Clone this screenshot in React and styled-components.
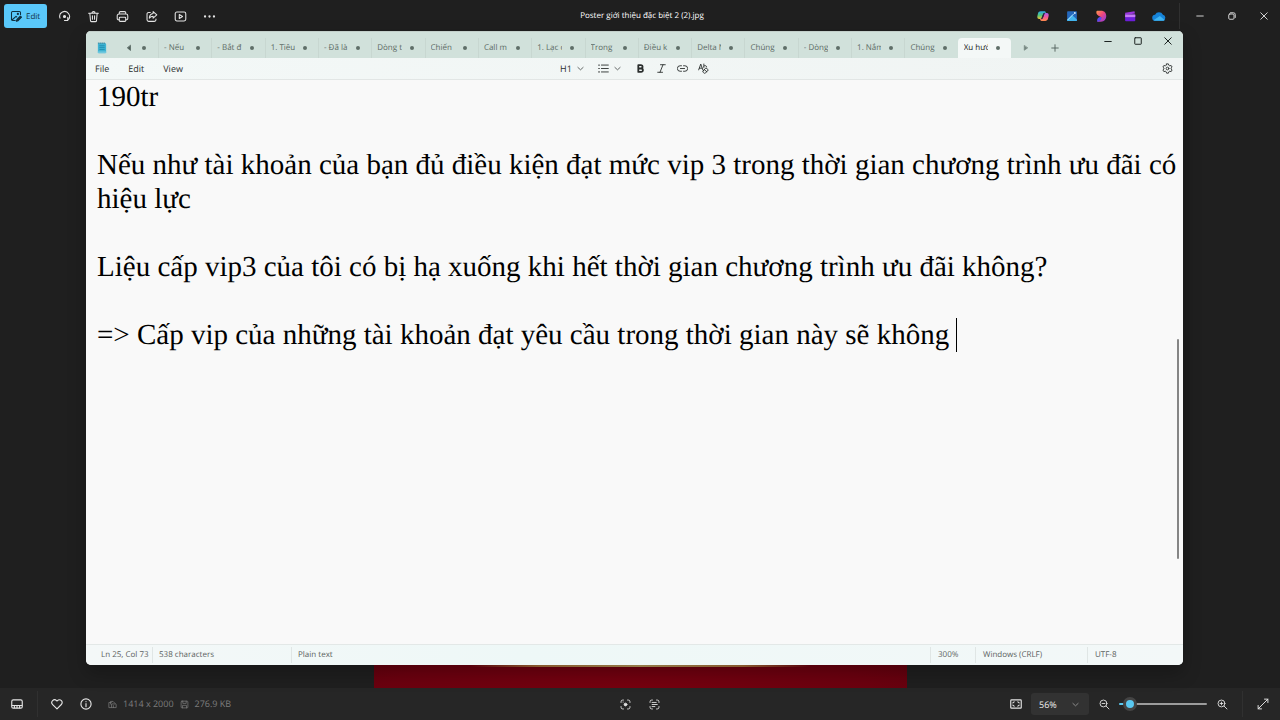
import React, { useLayoutEffect, useRef, useState } from "react";
import styled, { createGlobalStyle, css } from "styled-components";

const GlobalStyle = createGlobalStyle`
  *, *::before, *::after { box-sizing: border-box; }
  body {
    margin: 0;
    background: #1f1f1f;
    font-family: "Open Sans", "Noto Sans", sans-serif;
    font-size: 8px;
    text-rendering: geometricPrecision;
  }
  button, input, select, textarea { font: inherit; color: inherit; margin: 0; text-rendering: inherit; }
`;

/* ---------- shared parts ---------- */

const Icon = styled.svg.attrs({ viewBox: "0 0 16 16", "aria-hidden": true })`
  display: block;
  flex: none;
  width: ${(p) => p.$size || 12}px;
  height: ${(p) => p.$size || 12}px;
  fill: none;
  stroke: currentColor;
  stroke-width: ${(p) => p.$weight || 1.3};
  stroke-linecap: round;
  stroke-linejoin: round;
`;

const IconButton = styled.button`
  display: flex;
  align-items: center;
  justify-content: center;
  flex: none;
  width: ${(p) => p.$width || 24}px;
  height: 24px;
  padding: 0;
  border: 0;
  background: transparent;
`;

const ChevronDown = ({ size = 8 }) => (
  <Icon $size={size} $weight={1.6}><path d="M2 5.500 8 11l6-5.500" /></Icon>
);

/* ---------- photo viewer ---------- */

const Viewer = styled.div`
  display: grid;
  grid-template-rows: 32px minmax(0, 1fr) 32px;
  min-height: 100vh;
  position: relative;
  background: #1f1f1f;
  color: #e4e4e4;
`;

const BarSide = styled.div`
  display: flex;
  align-items: center;
  gap: ${(p) => p.$gap || 0}px;
  justify-content: ${(p) => (p.$end ? "flex-end" : "flex-start")};
`;

const TitleBar = styled.header`
  display: grid;
  grid-template-columns: 1fr auto 1fr;
  align-items: center;
  padding-left: 4px;
`;

const EditButton = styled.button`
  display: flex;
  align-items: center;
  gap: 4px;
  height: 24px;
  width: 43px;
  padding: 0 6px;
  border: 0;
  border-radius: 3px;
  background: #5ac8fa;
  color: #10303f;
`;

const FileName = styled.h1`
  margin: 0;
  font-size: 8px;
  font-weight: 400;
  line-height: 12px;
  color: #ffffff;
`;

const Divider = styled.span`
  flex: none;
  width: 1px;
  height: 26px;
  background: #303030;
  margin-left: ${(p) => p.$before}px;
  margin-right: ${(p) => p.$after}px;
`;

const Stage = styled.main`
  display: flex;
  justify-content: center;
`;

const Poster = styled.div`
  width: 533px;
  background: radial-gradient(ellipse 400px 60px at 48% 100%, #76000f 0%, #6c000f 60%, #5c000d 100%);
  display: flex;
  flex-direction: column;
  justify-content: flex-end;
`;

const PosterTrim = styled.div`
  height: 2px;
  margin: 0 96px 21px;
  background: linear-gradient(90deg, transparent, #a8703a 20%, #b99b5c 50%, #a8703a 80%, transparent);
`;

const BottomBar = styled.footer`
  display: grid;
  grid-template-columns: 1fr auto 1fr;
  align-items: center;
  background: #262626;
  padding: 0 5px;
`;

const MetaList = styled.div`
  display: flex;
  gap: 6px;
  margin-left: 10px;
`;

const Meta = styled.span`
  display: flex;
  align-items: center;
  gap: 6px;
  font-size: 9px;
  line-height: 12px;
  color: #7d7d7d;
`;

const ZoomBox = styled.label`
  display: grid;
  grid-template-columns: 1fr 8px;
  align-items: center;
  width: 58px;
  height: 22px;
  margin: 0 3px;
  padding-right: 9px;
  border-radius: 3px;
  background: #323232;
`;

const ZoomSelect = styled.select`
  appearance: none;
  grid-area: 1 / 1 / 2 / 3;
  height: 22px;
  padding: 0 8px;
  border: 0;
  background: transparent;
  font-size: 9px;
  color: #f0f0f0;
`;

const ZoomChevron = styled.span`
  grid-area: 1 / 2 / 2 / 3;
  pointer-events: none;
  color: #b0b0b0;
`;

const ZoomSlider = styled.input`
  appearance: none;
  width: 88px;
  height: 14px;
  margin: 0 3px;
  background: transparent;
  &::-webkit-slider-runnable-track {
    height: 2px;
    border-radius: 1px;
    background: linear-gradient(90deg, #5ac8f0 14%, #9c9c9c 14%);
  }
  &::-webkit-slider-thumb {
    appearance: none;
    width: 14px;
    height: 14px;
    margin-top: -6px;
    border: 3px solid #444444;
    border-radius: 50%;
    background: #5ac8f0;
  }
`;

/* ---------- notepad window ---------- */

const NotepadWindow = styled.section`
  position: absolute;
  inset: 31px 97px 55px 86px;
  display: grid;
  grid-template-columns: minmax(0, 1fr);
  grid-template-rows: 27px 22px minmax(0, 1fr) 21px;
  overflow: hidden;
  border-radius: 5px;
  background: #f9f9f9;
  color: #2a2e2d;
`;

const Shadow = styled.div`
  position: absolute;
  inset: 31px 97px 55px 86px;
  border-radius: 5px;
  box-shadow: 0 8px 18px rgba(0, 0, 0, 0.25);
`;

const TabStrip = styled.div`
  display: flex;
  align-items: flex-end;
  background: #d1e1db;
  border-top: 1px solid #c3cfca;
`;

const AppBadge = styled.span`
  display: flex;
  align-items: center;
  height: 20px;
  width: 37px;
  padding-left: 10px;
`;

const Scroller = styled.button`
  width: 12px;
  height: 20px;
  padding: 0;
  border: 0;
  background: transparent;
  display: flex;
  align-items: center;
  justify-content: center;
  color: #4f5f59;
`;

const Dot = styled.span`
  flex: none;
  width: 4px;
  height: 4px;
  border-radius: 50%;
  background: #5f6e68;
`;

const LeadingDot = styled.span`
  display: flex;
  align-items: center;
  width: 23px;
  height: 20px;
  padding-left: 7px;
`;

const Tabs = styled.div`
  display: flex;
  flex: 1;
  min-width: 0;
`;

const Tab = styled.button`
  display: flex;
  align-items: center;
  flex: 1 1 0;
  min-width: 0;
  height: 20px;
  padding: 0 11px 0 5px;
  border: 0;
  border-left: 1px solid #c8d7d1;
  background: transparent;
  color: #5c6b65;
  ${(p) => p.$active && css`
    border-left-color: transparent;
    border-radius: 4px 4px 0 0;
    background: #f4f8f7;
    color: #1b1b1b;
  `}
`;

const TabLabel = styled.span`
  flex: 1;
  min-width: 0;
  overflow: hidden;
  white-space: nowrap;
  text-align: left;
  line-height: 12px;
  margin-right: 8px;
`;

const StripActions = styled.div`
  display: flex;
  align-items: flex-end;
  width: 172px;
  height: 26px;
  padding-left: 9px;
`;

const AddTab = styled(Scroller)`
  margin-left: 17px;
`;

const WindowControls = styled.div`
  display: flex;
  align-self: flex-start;
  margin-left: auto;
  height: 18px;
  align-items: center;
`;

const WindowButton = styled(IconButton)`
  width: 30px;
  height: 18px;
  color: #1c2321;
`;

const Toolbar = styled.div`
  display: grid;
  grid-template-columns: 1fr auto 1fr;
  align-items: center;
  background: linear-gradient(90deg, #f3f8f7, #f0f4f3);
  border-bottom: 1px solid #e2e6e5;
`;

const Menus = styled.nav`
  display: flex;
  gap: 19px;
  padding-left: 9px;
`;

const ToolButton = styled.button`
  display: flex;
  align-items: center;
  gap: 5px;
  height: 20px;
  padding: 0;
  border: 0;
  margin-right: ${(p) => (p.$menu ? 4 : 0)}px;
  background: transparent;
  font-size: 9px;
  line-height: 12px;
`;

const FormatTools = styled.div`
  display: flex;
  align-items: center;
  gap: 10px;
`;

const Settings = styled.div`
  display: flex;
  justify-content: flex-end;
  padding-right: 10px;
`;

const Editor = styled.div`
  position: relative;
  display: flex;
  min-height: 0;
`;

const Page = styled.textarea`
  display: block;
  flex: 1;
  min-width: 0;
  resize: none;
  overflow: hidden;
  padding: 0 2px 0 11px;
  border: 0;
  outline: 0;
  background: transparent;
  color: #000000;
  font-family: "Liberation Serif", "Times New Roman", serif;
  font-size: 29px;
  line-height: 34px;
`;

const Caret = styled.span`
  position: absolute;
  width: 1px;
  height: 34px;
  background: #000000;
`;

const ScrollThumb = styled.span`
  position: absolute;
  right: 4px;
  top: 46%;
  height: 39%;
  width: 2px;
  border-radius: 1px;
  background: #868686;
`;

const StatusBar = styled.footer`
  display: grid;
  grid-template-columns: 66px 139px 1fr 45px 112px 96px;
  align-items: center;
  border-top: 1px solid #e3e8e7;
  background: linear-gradient(90deg, #f4f8f8, #eef8f7 40%, #f3f8f8);
  color: #5b6160;
`;

const StatusCell = styled.span`
  line-height: 16px;
  padding-left: ${(p) => (p.$first ? 15 : p.$wide ? 7 : 6)}px;
  border-left: ${(p) => (p.$first ? "0" : "1px solid #e0e6e5")};
  white-space: nowrap;
`;

const documentText = [
  "190tr",
  "",
  "Nếu như tài khoản của bạn đủ điều kiện đạt mức vip 3 trong thời gian chương trình ưu đãi có hiệu lực",
  "",
  "Liệu cấp vip3 của tôi có bị hạ xuống khi hết thời gian chương trình ưu đãi không?",
  "",
  "=> Cấp vip của những tài khoản đạt yêu cầu trong thời gian này sẽ không ",
].join("\n");

const tabs = [
  "- Nếu", "- Bắt đ", "1. Tiêu", "- Đã là", "Dòng t", "Chiến", "Call m", "1. Lạc c",
  "Trong", "Điều k", "Delta N", "Chúng", "- Dòng", "1. Nắm", "Chúng", "Xu hướ",
];

function TextPage() {
  const page = useRef(null);
  const [caret, setCaret] = useState(null);

  useLayoutEffect(() => {
    const place = () => {
      const el = page.current;
      const style = getComputedStyle(el);
      const pen = document.createElement("canvas").getContext("2d");
      pen.font = `${style.fontSize} ${style.fontFamily}`;
      const lastLine = el.value.slice(el.value.lastIndexOf("\n") + 1);
      el.style.alignSelf = "flex-start";
      el.style.height = "0";
      const contentHeight = el.scrollHeight;
      el.style.height = "";
      el.style.alignSelf = "";
      setCaret({
        left: Math.round(parseFloat(style.paddingLeft) + pen.measureText(lastLine).width),
        top: contentHeight - parseFloat(style.lineHeight),
      });
    };
    place();
    window.addEventListener("resize", place);
    return () => window.removeEventListener("resize", place);
  }, []);

  return (
    <Editor>
      <Page ref={page} aria-label="Text editor" spellCheck={false} defaultValue={documentText} />
      {caret && <Caret style={caret} />}
      <ScrollThumb />
    </Editor>
  );
}

function Notepad() {
  return (
    <NotepadWindow aria-label="Notepad">
      <TabStrip>
        <AppBadge>
          <Icon $size={12}>
            <rect x="2.500" y="1.500" width="11" height="13.500" rx="1" fill="#3fb3d2" stroke="none" />
            <path d="M3 1.500h10" stroke="#2b7f9b" strokeDasharray="1 1.500" />
            <path d="M5 5h6M5 7.500h6M5 10h6" stroke="#1d87aa" strokeWidth="1" />
            <path d="M2.500 13.500h11" stroke="#8fd6e6" />
          </Icon>
        </AppBadge>
        <Scroller aria-label="Scroll tabs left">
          <Icon $size={8}><path d="M11 3v10L5 8z" fill="currentColor" /></Icon>
        </Scroller>
        <LeadingDot><Dot /></LeadingDot>
        <Tabs>
          {tabs.map((name, i) => (
            <Tab key={i} $active={i === tabs.length - 1}>
              <TabLabel>{name}</TabLabel>
              <Dot />
            </Tab>
          ))}
        </Tabs>
        <StripActions>
          <Scroller aria-label="Scroll tabs right">
            <Icon $size={8}><path d="M4.500 3.500v9L11 8z" fill="#74857f" stroke="#74857f" /></Icon>
          </Scroller>
          <AddTab aria-label="New tab">
            <Icon $size={8} $weight={1.8}><path d="M8 1.500v13M1.500 8h13" /></Icon>
          </AddTab>
          <WindowControls>
            <WindowButton aria-label="Minimize"><Icon $size={8} $weight={2}><path d="M1.500 9h13" /></Icon></WindowButton>
            <WindowButton aria-label="Maximize"><Icon $size={8} $weight={2}><rect x="1.500" y="1.500" width="13" height="13" rx="1" /></Icon></WindowButton>
            <WindowButton aria-label="Close"><Icon $size={8} $weight={2}><path d="m1.500 1.500 13 13m0-13-13 13" /></Icon></WindowButton>
          </WindowControls>
        </StripActions>
      </TabStrip>

      <Toolbar>
        <Menus>
          <ToolButton>File</ToolButton>
          <ToolButton>Edit</ToolButton>
          <ToolButton>View</ToolButton>
        </Menus>
        <FormatTools>
          <ToolButton $menu>H1<ChevronDown size={7} /></ToolButton>
          <ToolButton $menu aria-label="List">
            <Icon $size={11}>
              <path d="M5 3h10M5 8h10M5 13h10" />
              <path d="M1.200 3h.6M1.200 8h.6M1.200 13h.6" strokeWidth="1.800" />
            </Icon>
            <ChevronDown size={7} />
          </ToolButton>
          <ToolButton aria-label="Bold">
            <Icon $size={11} $weight={2.6}><path d="M4.800 3h3.700a2.400 2.400 0 0 1 0 5H4.800zM4.800 8h4.200a2.500 2.500 0 0 1 0 5H4.800z" /></Icon>
          </ToolButton>
          <ToolButton aria-label="Italic">
            <Icon $size={11}><path d="M6.500 2.500h7M2.500 13.500h7M10.200 2.500l-4.400 11" /></Icon>
          </ToolButton>
          <ToolButton aria-label="Link">
            <Icon $size={11}><path d="M6.500 4H4.500a4 4 0 0 0 0 8h2M9.500 4h2a4 4 0 0 1 0 8h-2M5 8h6" /></Icon>
          </ToolButton>
          <ToolButton aria-label="Clear formatting">
            <Icon $size={11}>
              <path d="m1 10 3-8.500L7 10M2 7.500h4M8.500 1.500v5M8.500 4.500c1-1.500 4-1 4 1" />
              <path d="m7.500 11.500 4-4.500 3.500 3-4 4.500c-1 1-2 .5-3-.5s-1-1.700-.5-2.500zM9 9.500l3.800 3.200" />
            </Icon>
          </ToolButton>
        </FormatTools>
        <Settings>
          <ToolButton aria-label="Settings">
            <Icon $size={11}>
              <path d="M6.700 1.300h2.600l.6 2 1.300.8 2.100-.5 1.400 2.300L13.200 7.300v1.400l1.500 1.500-1.400 2.300-2.100-.5-1.300.8-.6 2H6.700l-.6-2-1.300-.8-2.100.5-1.400-2.300 1.500-1.500V7.300L1.300 5.900l1.400-2.300 2.100.5 1.300-.8z" />
              <circle cx="8" cy="8" r="2" />
            </Icon>
          </ToolButton>
        </Settings>
      </Toolbar>

      <TextPage />

      <StatusBar>
        <StatusCell $first>Ln 25, Col 73</StatusCell>
        <StatusCell>538 characters</StatusCell>
        <StatusCell>Plain text</StatusCell>
        <StatusCell $wide>300%</StatusCell>
        <StatusCell $wide>Windows (CRLF)</StatusCell>
        <StatusCell $wide>UTF-8</StatusCell>
      </StatusBar>
    </NotepadWindow>
  );
}

function AppShortcuts() {
  return (
    <>
      <IconButton aria-label="Copilot">
        <Icon $size={12}>
          <defs>
            <linearGradient id="copilotLeft" x1="0" y1="0" x2="0" y2="1"><stop stopColor="#29a8f0" /><stop offset=".55" stopColor="#55c878" /><stop offset="1" stopColor="#f5c032" /></linearGradient>
            <linearGradient id="copilotRight" x1="0" y1="0" x2="0" y2="1"><stop stopColor="#a65cf0" /><stop offset=".5" stopColor="#f0589a" /><stop offset="1" stopColor="#ff8a4c" /></linearGradient>
          </defs>
          <path d="M5 1.500h5c1 0 1.300.6 1.600 1.500L12 4.500H9.500C8.300 4.500 8 5.500 7.700 6.300L6.500 10c-.3 1-.8 2-2 2H3c-2 0-3-1.500-2.500-4l1-4C2 2.500 3 1.500 5 1.500z" fill="url(#copilotLeft)" stroke="none" />
          <path d="M11 14.500H6c-1 0-1.400-.6-1.700-1.500L4 11.500h2.500c1.200 0 1.500-1 1.800-1.800L9.500 6c.3-1 .8-2 2-2H13c2 0 3 1.500 2.500 4l-1 4c-.5 1.500-1.500 2.500-3.500 2.500z" fill="url(#copilotRight)" stroke="none" />
          <path d="M9.500 4.500 6.500 11.500" stroke="#2b2440" strokeWidth="1.500" />
        </Icon>
      </IconButton>
      <IconButton aria-label="Photos">
        <Icon $size={12}>
          <rect x="1.500" y="1.500" width="13" height="13" rx="1" fill="#2468bd" stroke="none" />
          <path d="M1.500 14.500V13L8 6.500l6.500 6v2z" fill="#43b5ef" stroke="none" />
          <path d="m2.500 13 7.500-7.500" stroke="#b8e4ff" />
          <circle cx="11.800" cy="4" r="1.200" fill="#e8f6ff" stroke="none" />
        </Icon>
      </IconButton>
      <IconButton aria-label="Designer">
        <Icon $size={12}>
          <defs>
            <linearGradient id="designer" x1="0" y1="0" x2="1" y2="1"><stop stopColor="#ff9a4a" /><stop offset=".45" stopColor="#f0487c" /><stop offset="1" stopColor="#8338e8" /></linearGradient>
          </defs>
          <path d="M3 1h5c4.500 0 7 3 7 7s-2.500 7.500-7 7.500H3c1-2.500 4.500-4 5.500-6C6 8.500 3 7 2 4.500 1.500 2.500 2 1 3 1z" fill="url(#designer)" stroke="none" />
          <path d="M3 15.500c-1-4 2-6.500 5.500-6 1 2-1 6-5.500 6z" fill="#5a48ee" stroke="none" />
        </Icon>
      </IconButton>
      <IconButton aria-label="Clipchamp">
        <Icon $size={12}>
          <path d="M1.500 3.500 14 1.500l.6 3-13 2z" fill="#9a34dc" stroke="none" />
          <rect x="1.500" y="6" width="13.500" height="9" rx="1" fill="#6c1fd8" stroke="none" />
          <path d="M1.500 6h13.500v3.500h-13.500z" fill="#c57af5" stroke="none" />
        </Icon>
      </IconButton>
      <IconButton aria-label="OneDrive">
        <Icon $size={14}>
          <path d="M4 13.500a3.500 3.500 0 0 1-.5-7A5 5 0 0 1 12.500 6.500 3.600 3.600 0 0 1 12.500 13.500z" fill="#1683d8" stroke="none" />
          <path d="M2 12.500 9 8l5.500 4.500c-.6.700-1.300 1-2 1H4c-.8 0-1.500-.4-2-1z" fill="#3fb4f2" stroke="none" />
        </Icon>
      </IconButton>
    </>
  );
}

export default function App() {
  return (
    <>
      <GlobalStyle />
      <Viewer>
        <TitleBar>
          <BarSide $gap={5}>
            <EditButton>
              <Icon $size={12} $weight={1.4}>
                <path d="M7 14H3.500A1.500 1.500 0 0 1 2 12.500v-9A1.500 1.500 0 0 1 3.500 2h9A1.500 1.500 0 0 1 14 3.500V6M3 13l5-4.500 1 .8" />
                <circle cx="10.500" cy="5.200" r=".8" />
                <path d="m8.500 15 .8-2.500 4.500-4.500 1.500 1.500-4.500 4.700z" fill="currentColor" />
              </Icon>
              Edit
            </EditButton>
            <IconButton aria-label="Rotate">
              <Icon $size={13}><path d="M2.500 10A6 6 0 1 1 12 12.500M12 9v4h-4" /><circle cx="8" cy="8" r="1.300" fill="currentColor" /></Icon>
            </IconButton>
            <IconButton aria-label="Delete">
              <Icon $size={13}><path d="M2 4h12M6 4a2 2 0 0 1 4 0M3.500 4l.8 9a1.500 1.500 0 0 0 1.500 1.300h4.400a1.500 1.500 0 0 0 1.500-1.300l.8-9M6.700 7v4.500M9.300 7v4.500" /></Icon>
            </IconButton>
            <IconButton aria-label="Print">
              <Icon $size={13}><path d="M4 5V3.500A1.500 1.500 0 0 1 5.500 2h5A1.500 1.500 0 0 1 12 3.500V5M4 12H3a1.500 1.500 0 0 1-1.500-1.500V7A2 2 0 0 1 3.500 5h9a2 2 0 0 1 2 2v3.500A1.500 1.500 0 0 1 13 12h-1" /><rect x="4" y="9" width="8" height="5" rx="1" /></Icon>
            </IconButton>
            <IconButton aria-label="Share">
              <Icon $size={13}><path d="M6.500 3H4.500a2 2 0 0 0-2 2v7a2 2 0 0 0 2 2h7a2 2 0 0 0 2-2v-1M10 2l4.500 4L10 10V7.700C8 7.700 6.500 8.500 5.300 10c.2-3 1.700-5.500 4.700-5.800z" /></Icon>
            </IconButton>
            <IconButton aria-label="Slideshow">
              <Icon $size={13}><rect x="1.500" y="2.500" width="13" height="11" rx="2" /><path d="M6.500 5.500v5L10.500 8z" /></Icon>
            </IconButton>
            <IconButton aria-label="See more">
              <Icon $size={13}><path d="M2.500 8h.01M8 8h.01M13.500 8h.01" strokeWidth="2.800" /></Icon>
            </IconButton>
          </BarSide>
          <FileName>Poster giới thiệu đặc biệt 2 (2).jpg</FileName>
          <BarSide $end>
            <BarSide $gap={5}><AppShortcuts /></BarSide>
            <Divider $before={8} $after={4} />
            <IconButton $width={32} aria-label="Minimize"><Icon $size={8} $weight={1.8}><path d="M1.500 8h13" /></Icon></IconButton>
            <IconButton $width={32} aria-label="Restore">
              <Icon $size={8} $weight={1.8}><rect x="1.500" y="4" width="10.500" height="10.500" rx="2" /><path d="M5 1.500h6A3.500 3.500 0 0 1 14.500 5v6" /></Icon>
            </IconButton>
            <IconButton $width={32} aria-label="Close"><Icon $size={8} $weight={1.8}><path d="m1.500 1.500 13 13m0-13-13 13" /></Icon></IconButton>
          </BarSide>
        </TitleBar>

        <Stage>
          <Poster><PosterTrim /></Poster>
        </Stage>

        <BottomBar>
          <BarSide>
            <IconButton aria-label="Filmstrip">
              <Icon $size={12} $weight={1.5}><rect x="1" y="2.500" width="14" height="11" rx="2" /><path d="M1.500 10h13M4.500 10.500v2.500M8 10.500v2.500M11.500 10.500v2.500" /></Icon>
            </IconButton>
            <Divider $before={8} $after={7} />
            <BarSide $gap={5}>
              <IconButton aria-label="Favorite">
                <Icon $size={12} $weight={1.5}><path d="M8 14.500 2.200 8.700a3.700 3.700 0 0 1 5.200-5.300L8 4l.6-.6a3.700 3.700 0 0 1 5.200 5.300z" /></Icon>
              </IconButton>
              <IconButton aria-label="File info">
                <Icon $size={12} $weight={1.5}><circle cx="8" cy="8" r="6.800" /><path d="M8 7.500v4M8 4.800v.1" /></Icon>
              </IconButton>
            </BarSide>
            <MetaList>
              <Meta>
                <Icon $size={9}><path d="M6 13.500H1.500v-9H6M4.500 7V2.500H9L12.500 6M7 7h6.500a1 1 0 0 1 1 1v5.500H7zM9.500 10v3.500" /></Icon>
                1414 x 2000
              </Meta>
              <Meta>
                <Icon $size={9}><rect x="2" y="2" width="12" height="12" rx="1.500" /><path d="M5 2v4h6V2M4.500 14V9.500h7V14" /></Icon>
                276.9 KB
              </Meta>
            </MetaList>
          </BarSide>
          <BarSide $gap={5}>
            <IconButton aria-label="Visual search">
              <Icon $size={11}><path d="M1.500 5V4A2.500 2.500 0 0 1 4 1.500h1M11 1.500h1A2.500 2.500 0 0 1 14.500 4v1M14.500 11v1a2.500 2.500 0 0 1-2.500 2.500h-1M5 14.500H4A2.500 2.500 0 0 1 1.500 12v-1" /><circle cx="8" cy="8" r="2" fill="currentColor" /><path d="M4.500 4.500h.1" /></Icon>
            </IconButton>
            <IconButton aria-label="Scan text">
              <Icon $size={11}><path d="M1.500 5V4A2.500 2.500 0 0 1 4 1.500h1M11 1.500h1A2.500 2.500 0 0 1 14.500 4v1M14.500 11v1a2.500 2.500 0 0 1-2.500 2.500h-1M5 14.500H4A2.500 2.500 0 0 1 1.500 12v-1M4.500 5h6M4.500 8h7.500M4.500 11h4" /></Icon>
            </IconButton>
          </BarSide>
          <BarSide $end>
            <IconButton aria-label="Zoom to fit">
              <Icon $size={12} $weight={1.5}><rect x="1" y="2.500" width="14" height="11" rx="1" /><path d="M3.800 6.500 5.500 5.200M12.200 6.500l-1.700-1.300M12.200 9.500l-1.700 1.300M3.800 9.500l1.700 1.300" /></Icon>
            </IconButton>
            <ZoomBox>
              <ZoomSelect aria-label="Zoom level" defaultValue="56%"><option>56%</option><option>100%</option></ZoomSelect>
              <ZoomChevron><ChevronDown size={7} /></ZoomChevron>
            </ZoomBox>
            <IconButton aria-label="Zoom out">
              <Icon $size={11}><circle cx="6.500" cy="6.500" r="5" /><path d="m10.300 10.300 4.200 4.200M4.500 6.500h4" /></Icon>
            </IconButton>
            <ZoomSlider type="range" min="0" max="100" defaultValue="6" aria-label="Zoom" />
            <IconButton aria-label="Zoom in">
              <Icon $size={11}><circle cx="6.500" cy="6.500" r="5" /><path d="m10.300 10.300 4.200 4.200M4.500 6.500h4M6.500 4.500v4" /></Icon>
            </IconButton>
            <Divider $before={8} $after={8} />
            <IconButton aria-label="Full screen">
              <Icon $size={12}><path d="M10 1.500h4.500V6M14.500 1.500l-13 13M1.500 10v4.500H6" /></Icon>
            </IconButton>
          </BarSide>
        </BottomBar>

        <Shadow />
        <Notepad />
      </Viewer>
    </>
  );
}
